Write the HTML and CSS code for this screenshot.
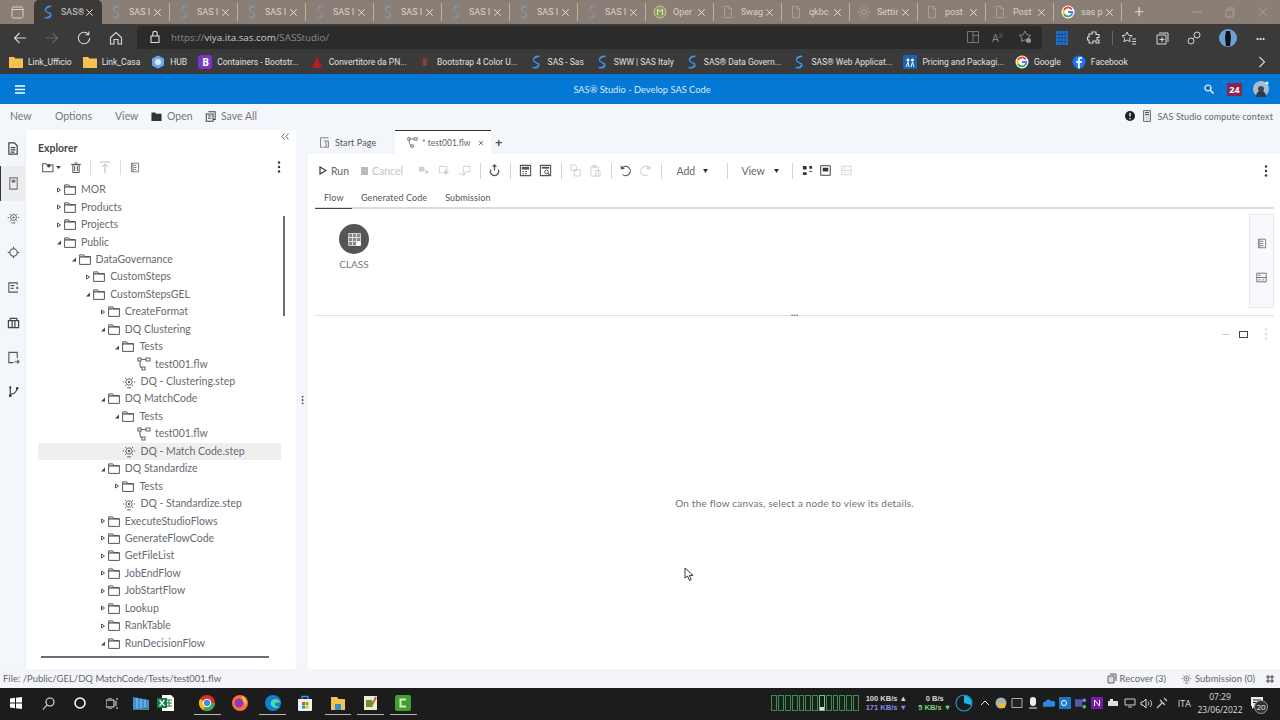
FILE: index.html
```html
<!DOCTYPE html>
<html lang="en">
<head>
<meta charset="utf-8">
<title>SAS Studio - Develop SAS Code</title>
<link rel="stylesheet" href="styles.css">
</head>
<body>
<svg class="defs" width="0" height="0" aria-hidden="true">
  <symbol id="sas" viewBox="0 0 14 16"><path d="M10.500 1.500C7 1 3.500 3 4 6c.4 2.500 6 3 6.300 5.500.2 1.700-1.500 3-3.500 3.200M3.500 14.500c3.500.5 7-1.500 6.500-4.500M4 6c.3-2 2.500-3.500 4.500-3.500" fill="none" stroke="currentColor" stroke-width="1.500" stroke-linecap="round"/></symbol>
  <symbol id="doc" viewBox="0 0 14 16"><path d="M3 1.500h5l3 3v10H3zM8 1.500v3h3" fill="none" stroke="currentColor"/></symbol>
  <symbol id="x" viewBox="0 0 10 10"><path d="M1.500 1.500l7 7m0-7l-7 7" fill="none" stroke="currentColor" stroke-width="1.100"/></symbol>
  <symbol id="folder" viewBox="0 0 12 11"><path d="M.6 2.600V.9h4.200l.8 1.700h5.800v7.800H.6z" fill="none" stroke="currentColor" stroke-width="1"/><path d="M.6 2.900h10.800" stroke="currentColor" stroke-width="1.300"/></symbol>
  <symbol id="open" viewBox="0 0 12 11"><path d="M.5 1h4l1 1.500h6v8H.5z" fill="currentColor"/></symbol>
  <symbol id="save" viewBox="0 0 12 13"><path d="M3.500 1h8v9h-2M1 3.500h8V12H1z M3 6h4M3 8.500h4" fill="none" stroke="currentColor" stroke-width="1.200"/></symbol>
  <symbol id="flow" viewBox="0 0 14 14"><path d="M1 1h3v3H1zM9 1h4v3H9zM5 10h3v3H5zM4 2.500h5M3 4v3.500c0 1.500 1 3 2 3.500" fill="none" stroke="currentColor" stroke-width="1.100"/></symbol>
  <symbol id="step" viewBox="0 0 14 14"><circle cx="7" cy="7" r="3.200" fill="none" stroke="currentColor"/><circle cx="7" cy="7" r="1.200" fill="currentColor"/><path d="M.8 7h1.400M11.800 7h1.400M3 3l1 1M11 3l-1 1M3 11l1-1M11 11l-1-1M5 12.800h4" stroke="currentColor" fill="none"/></symbol>
  <symbol id="tri-r" viewBox="0 0 6 8"><path d="M1.500 2l3 2-3 2z" fill="#fff" stroke="#555" stroke-width="1"/></symbol>
  <symbol id="tri-d" viewBox="0 0 6 8"><path d="M5 2.500v4H1z" fill="#444"/></symbol>
  <symbol id="rect-doc" viewBox="0 0 14 14"><path d="M2 1h10v12H2zM5 4h4M5 7h4M5 10h4M4 1v12" fill="none" stroke="currentColor"/></symbol>
  <symbol id="split" viewBox="0 0 14 14"><path d="M1 1.500h12v11H1zM1 7h12M3 4h3M3 10h2.500M8 10h2.500" fill="none" stroke="currentColor"/></symbol>
  <symbol id="calc" viewBox="0 0 14 14"><path d="M1.500 1.500h11v11h-11z" fill="none" stroke="currentColor" stroke-width="1.200"/><path d="M3 3h8v3H3z" fill="currentColor"/><path d="M3.500 8h2M6.500 8h2M3.500 10.500h2M6.500 10.500h2" stroke="currentColor"/></symbol>
  <symbol id="calc2" viewBox="0 0 14 14"><path d="M1.500 1.500h11v11h-11z" fill="none" stroke="currentColor" stroke-width="1.200"/><path d="M3 3h8v2H3z" fill="currentColor"/><circle cx="8" cy="8.500" r="2" fill="none" stroke="currentColor"/><path d="M9.500 10l2.500 2.500" stroke="currentColor" stroke-width="1.200"/></symbol>
  <symbol id="run-sel" viewBox="0 0 14 12"><path d="M1 2h6v5H1zM8 5l4 2.500L8 10z" fill="currentColor"/></symbol>
  <symbol id="run-fr" viewBox="0 0 14 12"><path d="M1.500 1.500h8v7h-8z" fill="none" stroke="currentColor"/><path d="M7 5l5 3-5 3z" fill="currentColor"/></symbol>
  <symbol id="run-to" viewBox="0 0 14 12"><path d="M6 1.500h7v6H6zM1 10h7M5 7.500l3 2.500-3 1.500" fill="none" stroke="currentColor"/></symbol>
  <symbol id="anchor" viewBox="0 0 14 14"><path d="M3 6a4.500 4.500 0 1 0 8 0" fill="none" stroke="currentColor" stroke-width="1.300"/><path d="M7 1v6M5 3l2-2 2 2" fill="none" stroke="currentColor" stroke-width="1.300"/></symbol>
  <symbol id="copy" viewBox="0 0 14 14"><path d="M2 1h5l1 2v4H2zM6 6h6v7H6z" fill="none" stroke="currentColor"/></symbol>
  <symbol id="paste" viewBox="0 0 14 14"><path d="M2 3h8v10H2zM4.500 1.500h3V4h-3zM7 7h5v6H7z" fill="none" stroke="currentColor"/></symbol>
  <symbol id="undo" viewBox="0 0 14 14"><path d="M3.200 4.400A5 5 0 1 1 4 11.500" fill="none" stroke="currentColor" stroke-width="1.200"/><path d="M1.500 1.500l.7 4.500 4.300-1z" fill="currentColor"/></symbol>
  <symbol id="redo" viewBox="0 0 14 14"><path d="M10.800 4.400A5 5 0 1 0 10 11.500" fill="none" stroke="currentColor" stroke-width="1.200"/><path d="M12.500 1.500l-.7 4.500-4.300-1z" fill="currentColor"/></symbol>
  <symbol id="grid4" viewBox="0 0 12 12"><path d="M1 1h4v4H1zM8 1h3v3H8zM1 8h4v3H1z" fill="currentColor"/><path d="M8 7h3" stroke="currentColor"/></symbol>
  <symbol id="box" viewBox="0 0 12 12"><path d="M.8.800h10.400v10.400H.8z" fill="none" stroke="currentColor"/><path d="M3 3h6v4H3z" fill="currentColor"/></symbol>
  <symbol id="dots" viewBox="0 0 4 12"><circle cx="2" cy="1.500" r="1.200" fill="currentColor"/><circle cx="2" cy="6" r="1.200" fill="currentColor"/><circle cx="2" cy="10.500" r="1.200" fill="currentColor"/></symbol>
</svg>

<div class="chrome-tabs">
  <div class="win-square"><svg width="13" height="13" viewBox="0 0 13 13"><path d="M1 2.500C1 1.700 1.700 1 2.500 1h8c.8 0 1.500.7 1.500 1.500v8c0 .8-.7 1.500-1.500 1.500h-8C1.700 12 1 11.300 1 10.500zM1 3.500h11" fill="none" stroke="#d8d4d0"/></svg></div>
  <div class="btab active"><svg class="fav sas-blue"><use href="#sas"/></svg><span class="btab-t">SAS®</span><svg class="btab-x"><use href="#x"/></svg></div>
  <div class="btab"><svg class="fav sas-dim"><use href="#sas"/></svg><span class="btab-t">SAS I</span><svg class="btab-x"><use href="#x"/></svg></div>
  <div class="btab"><svg class="fav sas-dim"><use href="#sas"/></svg><span class="btab-t">SAS I</span><svg class="btab-x"><use href="#x"/></svg></div>
  <div class="btab"><svg class="fav sas-dim"><use href="#sas"/></svg><span class="btab-t">SAS I</span><svg class="btab-x"><use href="#x"/></svg></div>
  <div class="btab"><svg class="fav sas-dim"><use href="#sas"/></svg><span class="btab-t">SAS I</span><svg class="btab-x"><use href="#x"/></svg></div>
  <div class="btab"><svg class="fav sas-dim"><use href="#sas"/></svg><span class="btab-t">SAS I</span><svg class="btab-x"><use href="#x"/></svg></div>
  <div class="btab"><svg class="fav sas-dim"><use href="#sas"/></svg><span class="btab-t">SAS I</span><svg class="btab-x"><use href="#x"/></svg></div>
  <div class="btab"><svg class="fav sas-dim"><use href="#sas"/></svg><span class="btab-t">SAS I</span><svg class="btab-x"><use href="#x"/></svg></div>
  <div class="btab"><svg class="fav sas-dim"><use href="#sas"/></svg><span class="btab-t">SAS I</span><svg class="btab-x"><use href="#x"/></svg></div>
  <div class="btab"><svg class="fav" viewBox="0 0 14 14"><circle cx="7" cy="7" r="6" fill="#8d9a5f" stroke="#c4cf96"/><path d="M4.500 10V4L7 7l2.500-3v6" fill="none" stroke="#dfe6b5"/></svg><span class="btab-t">Oper</span><svg class="btab-x"><use href="#x"/></svg></div>
  <div class="btab"><svg class="fav doc-dim"><use href="#doc"/></svg><span class="btab-t">Swag</span><svg class="btab-x"><use href="#x"/></svg></div>
  <div class="btab"><svg class="fav doc-dim"><use href="#doc"/></svg><span class="btab-t">qkbc</span><svg class="btab-x"><use href="#x"/></svg></div>
  <div class="btab"><svg class="fav doc-dim" viewBox="0 0 14 14"><circle cx="7" cy="7" r="2.500" fill="none" stroke="currentColor"/><path d="M7 1v2M7 11v2M1 7h2M11 7h2M2.800 2.800l1.400 1.400M9.800 9.800l1.400 1.400M2.800 11.200l1.400-1.400M9.800 4.200l1.400-1.400" stroke="currentColor"/></svg><span class="btab-t">Settir</span><svg class="btab-x"><use href="#x"/></svg></div>
  <div class="btab"><svg class="fav doc-dim"><use href="#doc"/></svg><span class="btab-t">post</span><svg class="btab-x"><use href="#x"/></svg></div>
  <div class="btab"><svg class="fav doc-dim"><use href="#doc"/></svg><span class="btab-t">Post</span><svg class="btab-x"><use href="#x"/></svg></div>
  <div class="btab"><svg class="fav" viewBox="0 0 14 14"><circle cx="7" cy="7" r="6.500" fill="#fff"/><path d="M10.800 4.500A4.500 4.500 0 0 0 3 5" fill="none" stroke="#ea4335" stroke-width="1.800"/><path d="M3 5a4.500 4.500 0 0 0 0 4" fill="none" stroke="#fbbc05" stroke-width="1.800"/><path d="M3 9a4.500 4.500 0 0 0 7.500.8" fill="none" stroke="#34a853" stroke-width="1.800"/><path d="M7 7h4.300a4.500 4.500 0 0 1-1 3" fill="none" stroke="#4285f4" stroke-width="1.800"/></svg><span class="btab-t">sas p</span><svg class="btab-x"><use href="#x"/></svg></div>
  <div class="btab-new">+</div>
  <div class="win-ctrls">
    <svg width="12" height="12" viewBox="0 0 12 12"><path d="M1 6h10" stroke="#a89d94"/></svg>
    <svg width="12" height="12" viewBox="0 0 12 12"><path d="M2 4h7v7H2zM4 4V2h6v6H9" fill="none" stroke="#a89d94"/></svg>
    <svg width="12" height="12" viewBox="0 0 12 12"><path d="M1.500 1.500l9 9m0-9l-9 9" stroke="#a89d94"/></svg>
  </div>
</div>

<div class="chrome-addr">
  <div class="nav-ic"><svg width="16" height="16" viewBox="0 0 16 16"><path d="M14 8H2.500M7.500 3l-5 5 5 5" fill="none" stroke="#d8d8d8" stroke-width="1.100"/></svg></div>
  <div class="nav-ic"><svg width="16" height="16" viewBox="0 0 16 16"><path d="M2 8h11.500M8.500 3l5 5-5 5" fill="none" stroke="#666" stroke-width="1.100"/></svg></div>
  <div class="nav-ic"><svg width="16" height="16" viewBox="0 0 16 16"><path d="M12.500 4.500A5.700 5.700 0 1 0 13.700 8M12.800 1.500v3.300H9.500" fill="none" stroke="#d8d8d8" stroke-width="1.100"/></svg></div>
  <div class="nav-ic"><svg width="16" height="16" viewBox="0 0 16 16"><path d="M2.500 7.500L8 2.500l5.500 5V14H10V9.500H6V14H2.500z" fill="none" stroke="#d8d8d8" stroke-width="1.100"/></svg></div>
  <div class="omnibox">
    <svg width="12" height="14" viewBox="0 0 12 14"><path d="M2 6h8v6.500H2zM3.800 6V3.500a2.200 2.200 0 0 1 4.400 0V6" fill="none" stroke="#e2e2e2" stroke-width="1.100"/></svg>
    <span class="url"><span class="url-dim">https://</span><span class="url-b">viya.ita.sas.com</span><span class="url-dim">/SASStudio/</span></span>
    <div class="omni-end">
      <svg width="14" height="14" viewBox="0 0 14 14"><path d="M1.500 1.500h11v11h-11zM7 1.500v11M7 5.500h5.500" fill="none" stroke="#777"/></svg>
      <span class="read-a">A<sup>))</sup></span>
      <svg width="14" height="14" viewBox="0 0 14 14"><path d="M7 1l1.800 3.700 4 .6-2.900 2.800.7 4L7 9.700 3.400 11.600l.7-4L1.200 5.300l4-.6z" fill="none" stroke="#888"/><circle cx="10.500" cy="10.500" r="2.500" fill="#999"/></svg>
    </div>
  </div>
  <div class="bar-ext">
    <svg class="ext-1" width="12" height="14" viewBox="0 0 12 14"><path d="M0 0h12v14H0z" fill="#2473d4"/><path d="M0 3.500h12M0 7h12M0 10.500h12M3 0v14M6 0v14M9 0v14" stroke="#15437a" stroke-width=".7"/></svg>
    <svg class="ext-2" width="16" height="16" viewBox="0 0 16 16"><path d="M6 2h4v2.500h3v3h-2v2.500h2v3H10v-2H7v2H3v-3H1.500v-3H3v-3h3z" fill="none" stroke="#d8d8d8" stroke-width="1.100"/></svg>
    <i class="ext-sep"></i>
    <svg class="ext-3" width="16" height="16" viewBox="0 0 16 16"><path d="M6 2l1.500 3.200 3.500.5-2.500 2.500.6 3.500L6 10 3 11.700l.6-3.500L1 5.700l3.500-.5zM11 9h4M11 11.500h4M11 14h4" fill="none" stroke="#d8d8d8"/></svg>
    <svg class="ext-4" width="16" height="16" viewBox="0 0 16 16"><path d="M3 5h9v9H3zM5 3h9v9M8 7v5M5.500 9.500h5" fill="none" stroke="#d8d8d8"/></svg>
    <svg class="ext-5" width="16" height="16" viewBox="0 0 16 16"><circle cx="5" cy="11" r="3" fill="none" stroke="#d8d8d8"/><circle cx="11" cy="5" r="3" fill="none" stroke="#d8d8d8"/><path d="M8 7.500L7 9" stroke="#d8d8d8"/></svg>
    <svg class="ext-6" width="18" height="18" viewBox="0 0 18 18"><circle cx="9" cy="9" r="9" fill="#6f9fd8"/><path d="M7 2h4l1 6-1 9H7L6 8z" fill="#111"/></svg>
    <span class="ext-7">···</span>
  </div>
</div>

<div class="chrome-bookmarks">
  <div class="bm"><svg class="bm-i" viewBox="0 0 14 12"><path d="M0 1h5l1.500 1.500H14V12H0z" fill="#f2c34e"/></svg><span>Link_Ufficio</span></div>
  <div class="bm"><svg class="bm-i" viewBox="0 0 14 12"><path d="M0 1h5l1.500 1.500H14V12H0z" fill="#f2c34e"/></svg><span>Link_Casa</span></div>
  <div class="bm"><svg class="bm-i" viewBox="0 0 14 14"><path d="M7 .5l6 3v7l-6 3-6-3v-7z" fill="#6aa8e8"/><circle cx="7" cy="7" r="3" fill="#d9ecff"/></svg><span>HUB</span></div>
  <div class="bm"><svg class="bm-i" viewBox="0 0 14 14"><rect width="14" height="14" rx="3" fill="#7a34c8"/></svg><b class="bm-b">B</b><span>Containers - Bootstr...</span></div>
  <div class="bm"><svg class="bm-i" viewBox="0 0 14 14"><path d="M7 1l5 12H2z" fill="#b3201c"/></svg><span>Convertitore da PN...</span></div>
  <div class="bm"><svg class="bm-i" viewBox="0 0 14 14"><path d="M3 2h8v10H3z" fill="#443a3a"/><path d="M6 3v8M8 4v6" stroke="#c44"/></svg><span>Bootstrap 4 Color U...</span></div>
  <div class="bm"><svg class="bm-i sas-blue"><use href="#sas"/></svg><span>SAS - Sas</span></div>
  <div class="bm"><svg class="bm-i sas-blue"><use href="#sas"/></svg><span>SWW | SAS Italy</span></div>
  <div class="bm"><svg class="bm-i sas-blue"><use href="#sas"/></svg><span>SAS® Data Govern...</span></div>
  <div class="bm"><svg class="bm-i sas-blue"><use href="#sas"/></svg><span>SAS® Web Applicat...</span></div>
  <div class="bm"><svg class="bm-i" viewBox="0 0 14 14"><rect width="14" height="14" fill="#1d62b5"/><circle cx="5" cy="5" r="1.500" fill="#fff"/><circle cx="9.500" cy="5" r="1.500" fill="#fff"/><path d="M3 12l2-5 1 5M8 12l1.500-5 1.500 5" stroke="#fff" fill="none"/></svg><span>Pricing and Packagi...</span></div>
  <div class="bm"><svg class="bm-i" viewBox="0 0 14 14"><circle cx="7" cy="7" r="6.500" fill="#fff"/><path d="M10.800 4.500A4.500 4.500 0 0 0 3 5" fill="none" stroke="#ea4335" stroke-width="1.800"/><path d="M3 5a4.500 4.500 0 0 0 0 4" fill="none" stroke="#fbbc05" stroke-width="1.800"/><path d="M3 9a4.500 4.500 0 0 0 7.500.8" fill="none" stroke="#34a853" stroke-width="1.800"/><path d="M7 7h4.300a4.500 4.500 0 0 1-1 3" fill="none" stroke="#4285f4" stroke-width="1.800"/></svg><span>Google</span></div>
  <div class="bm"><svg class="bm-i" viewBox="0 0 14 14"><circle cx="7" cy="7" r="6.500" fill="#1877f2"/><path d="M7.800 13.500V8h1.700l.3-2H7.800V4.800c0-.6.3-1 1-1h1.100V2.200C9 2 7.200 1.800 6.400 3c-.5.600-.5 1.300-.5 3H4.300v2h1.600v5.500z" fill="#fff"/></svg><span>Facebook</span></div>
  <svg class="bm-more" width="8" height="12" viewBox="0 0 8 12"><path d="M1.500 1l5 5-5 5" fill="none" stroke="#d8d8d8" stroke-width="1.100"/></svg>
</div>

<header class="app-header">
  <svg class="app-burger" width="10" height="9" viewBox="0 0 10 9"><path d="M0 1h10M0 4.500h10M0 8h10" stroke="#fff" stroke-width="1.500"/></svg>
  <div class="app-title">SAS® Studio - Develop SAS Code</div>
  <div class="app-right">
    <svg width="10" height="10" viewBox="0 0 10 10"><circle cx="4" cy="4" r="3" fill="none" stroke="#fff" stroke-width="1.200"/><path d="M6.300 6.300L9.500 9.500" stroke="#fff" stroke-width="1.300"/></svg>
    <span class="badge24">24</span>
    <svg width="16" height="16" viewBox="0 0 16 16"><circle cx="8" cy="8" r="8" fill="#a9bdd0"/><circle cx="8" cy="8" r="3" fill="#3c4a55"/><path d="M3 16c0-5 3-6 5-6s5 1 5 6z" fill="#2f3a44"/><circle cx="14" cy="2" r="1.500" fill="#dff"/></svg>
  </div>
</header>

<nav class="app-menu">
  <span class="m-new">New</span>
  <span class="m-opt">Options</span>
  <span class="m-view">View</span>
  <span class="m-open"><svg class="m-i"><use href="#open"/></svg>Open</span>
  <span class="m-save"><svg class="m-i"><use href="#save"/></svg>Save All</span>
  <div class="m-right">
    <svg width="10" height="10" viewBox="0 0 10 10"><circle cx="5" cy="5" r="5" fill="#222"/><path d="M5 2v3.500M5 7v1.200" stroke="#fff" stroke-width="1.400"/></svg>
    <svg class="m-srv" width="8" height="12" viewBox="0 0 8 12"><path d="M.5.500h7v11h-7z" fill="#ddd" stroke="#777"/><path d="M2 2.500h4M2 4.500h4" stroke="#555"/></svg>
    <span>SAS Studio compute context</span>
  </div>
</nav>

<div class="workspace">
  <aside class="rail">
    <div class="rail-i"><svg viewBox="0 0 14 14"><path d="M2 1h6l3 3v9H2zM4 6h5M4 8.500h5M4 11h4" fill="none" stroke="#444" stroke-width="1.300"/></svg></div>
    <div class="rail-i on"><svg viewBox="0 0 14 14"><path d="M3 1h8v12H3z" fill="none" stroke="#777" stroke-width="1.200"/><path d="M5 3h4v3H5z" fill="#777"/></svg></div>
    <div class="rail-i"><svg><use href="#step"/></svg></div>
    <div class="rail-i"><svg viewBox="0 0 14 14"><circle cx="7" cy="7" r="4" fill="none" stroke="#555" stroke-width="1.200"/><path d="M7 .8v2.200M7 11v2.200M.8 7H3M11 7h2.200" stroke="#555" stroke-width="1.200"/></svg></div>
    <div class="rail-i"><svg viewBox="0 0 14 14"><path d="M11 4V2H2v10h9v-1M4 5h4M4 8h3" fill="none" stroke="#555" stroke-width="1.200"/><path d="M11 6v3M9.500 7.500h3" stroke="#555"/></svg></div>
    <div class="rail-i"><svg viewBox="0 0 14 14"><path d="M1.500 5h11v7.500h-11zM3.500 5V2.500h7V5M5.500 5v7.500M8.500 5v7.500" fill="none" stroke="#444" stroke-width="1.300"/></svg></div>
    <div class="rail-i"><svg viewBox="0 0 14 14"><path d="M7 12.500H2v-11h9v6" fill="none" stroke="#555" stroke-width="1.200"/><path d="M8 11.500h5M11 9.500l2 2-2 2" fill="none" stroke="#555" stroke-width="1.100"/></svg></div>
    <div class="rail-i"><svg viewBox="0 0 14 14"><circle cx="3.500" cy="11.500" r="1.500" fill="#333"/><circle cx="3.500" cy="2.500" r="1.200" fill="#333"/><circle cx="11" cy="3.500" r="1.300" fill="#333"/><path d="M3.500 3v7M3.500 10c4 0 6.500-2.500 7.500-6" fill="none" stroke="#333" stroke-width="1.200"/></svg></div>
  </aside>

  <section class="explorer">
    <div class="ex-head"><h2>Explorer</h2><svg width="8" height="7" viewBox="0 0 8 7"><path d="M3.500.5L.8 3.500l2.700 3M7.500.5L4.800 3.500l2.700 3" fill="none" stroke="#666"/></svg></div>
    <div class="ex-tools">
      <svg class="t-new" width="12" height="11" viewBox="0 0 14 12"><path d="M.8 3V1.500h4l1 1.500h7v8H.8z" fill="none" stroke="#555" stroke-width="1.200"/><circle cx="8" cy="4" r="2" fill="#444"/></svg>
      <svg class="t-car" width="5" height="3" viewBox="0 0 5 3"><path d="M0 0h5L2.500 3z" fill="#444"/></svg>
      <svg class="t-del" width="10" height="11" viewBox="0 0 11 12"><path d="M2 3h7v8.500H2zM0 2.500h11M4 1h3M4 4.500v5.500M7 4.500v5.500" fill="none" stroke="#555" stroke-width="1.100"/></svg>
      <i class="t-sep"></i>
      <svg class="t-up" width="10" height="12" viewBox="0 0 10 12"><path d="M0 1h10M5 12V3M2 6l3-3 3 3" fill="none" stroke="#bbb"/></svg>
      <i class="t-sep"></i>
      <svg class="t-prop" width="10" height="11"><use href="#rect-doc"/></svg>
      <svg class="t-dots" width="4" height="12"><use href="#dots"/></svg>
    </div>
    <ul class="tree">
      <li class="row l0"><svg class="arr"><use href="#tri-r"/></svg><svg class="fld"><use href="#folder"/></svg>MOR</li>
      <li class="row l0"><svg class="arr"><use href="#tri-r"/></svg><svg class="fld"><use href="#folder"/></svg>Products</li>
      <li class="row l0"><svg class="arr"><use href="#tri-r"/></svg><svg class="fld"><use href="#folder"/></svg>Projects</li>
      <li class="row l0"><svg class="arr"><use href="#tri-d"/></svg><svg class="fld"><use href="#folder"/></svg>Public</li>
      <li class="row l1"><svg class="arr"><use href="#tri-d"/></svg><svg class="fld"><use href="#folder"/></svg>DataGovernance</li>
      <li class="row l2"><svg class="arr"><use href="#tri-r"/></svg><svg class="fld"><use href="#folder"/></svg>CustomSteps</li>
      <li class="row l2"><svg class="arr"><use href="#tri-d"/></svg><svg class="fld"><use href="#folder"/></svg>CustomStepsGEL</li>
      <li class="row l3"><svg class="arr"><use href="#tri-r"/></svg><svg class="fld"><use href="#folder"/></svg>CreateFormat</li>
      <li class="row l3"><svg class="arr"><use href="#tri-d"/></svg><svg class="fld"><use href="#folder"/></svg>DQ Clustering</li>
      <li class="row l4"><svg class="arr"><use href="#tri-d"/></svg><svg class="fld"><use href="#folder"/></svg>Tests</li>
      <li class="row l5 leaf"><svg class="fil"><use href="#flow"/></svg>test001.flw</li>
      <li class="row l4 leaf"><svg class="fil"><use href="#step"/></svg>DQ - Clustering.step</li>
      <li class="row l3"><svg class="arr"><use href="#tri-d"/></svg><svg class="fld"><use href="#folder"/></svg>DQ MatchCode</li>
      <li class="row l4"><svg class="arr"><use href="#tri-d"/></svg><svg class="fld"><use href="#folder"/></svg>Tests</li>
      <li class="row l5 leaf"><svg class="fil"><use href="#flow"/></svg>test001.flw</li>
      <li class="row l4 leaf sel"><svg class="fil"><use href="#step"/></svg>DQ - Match Code.step</li>
      <li class="row l3"><svg class="arr"><use href="#tri-d"/></svg><svg class="fld"><use href="#folder"/></svg>DQ Standardize</li>
      <li class="row l4"><svg class="arr"><use href="#tri-r"/></svg><svg class="fld"><use href="#folder"/></svg>Tests</li>
      <li class="row l4 leaf"><svg class="fil"><use href="#step"/></svg>DQ - Standardize.step</li>
      <li class="row l3"><svg class="arr"><use href="#tri-r"/></svg><svg class="fld"><use href="#folder"/></svg>ExecuteStudioFlows</li>
      <li class="row l3"><svg class="arr"><use href="#tri-r"/></svg><svg class="fld"><use href="#folder"/></svg>GenerateFlowCode</li>
      <li class="row l3"><svg class="arr"><use href="#tri-r"/></svg><svg class="fld"><use href="#folder"/></svg>GetFileList</li>
      <li class="row l3"><svg class="arr"><use href="#tri-r"/></svg><svg class="fld"><use href="#folder"/></svg>JobEndFlow</li>
      <li class="row l3"><svg class="arr"><use href="#tri-r"/></svg><svg class="fld"><use href="#folder"/></svg>JobStartFlow</li>
      <li class="row l3"><svg class="arr"><use href="#tri-r"/></svg><svg class="fld"><use href="#folder"/></svg>Lookup</li>
      <li class="row l3"><svg class="arr"><use href="#tri-r"/></svg><svg class="fld"><use href="#folder"/></svg>RankTable</li>
      <li class="row l3"><svg class="arr"><use href="#tri-d"/></svg><svg class="fld"><use href="#folder"/></svg>RunDecisionFlow</li>
    </ul>
    <div class="sb-v"></div>
    <div class="sb-h"></div>
  </section>

  <div class="gutter"><svg width="3" height="12" viewBox="0 0 4 12"><use href="#dots"/></svg></div>

  <main class="main">
    <div class="doc-tabs">
      <div class="dt dt-start"><svg class="dt-i" viewBox="0 0 12 14"><path d="M11 1H1v12h3M5 5h6v8H5" fill="none" stroke="#666"/><path d="M9.500 6.500c-2-.5-3 1-1.500 2.500s.5 3-1.500 2.500" fill="none" stroke="#666"/></svg>Start Page</div>
      <div class="dt dt-active"><svg class="dt-i"><use href="#flow"/></svg>* test001.flw<svg class="dt-x"><use href="#x"/></svg></div>
      <div class="dt-add">+</div>
    </div>
    <div class="toolbar">
      <span class="tb-run"><svg width="8" height="9" viewBox="0 0 8 9"><path d="M1 1l6 3.500L1 8z" fill="#fff" stroke="#333" stroke-width="1.200"/></svg>Run</span>
      <span class="tb-cancel"><svg width="7" height="8" viewBox="0 0 7 8"><path d="M0 0h7v8H0z" fill="#bbb"/></svg>Cancel</span>
      <svg class="ti off first"><use href="#run-sel"/></svg>
      <svg class="ti off"><use href="#run-fr"/></svg>
      <svg class="ti off"><use href="#run-to"/></svg>
      <i class="sep"></i>
      <svg class="ti"><use href="#anchor"/></svg>
      <i class="sep"></i>
      <svg class="ti"><use href="#calc"/></svg>
      <svg class="ti"><use href="#calc2"/></svg>
      <i class="sep"></i>
      <svg class="ti off"><use href="#copy"/></svg>
      <svg class="ti off"><use href="#paste"/></svg>
      <i class="sep"></i>
      <svg class="ti"><use href="#undo"/></svg>
      <svg class="ti off"><use href="#redo"/></svg>
      <i class="sep"></i>
      <span class="tb-dd tb-add">Add<svg width="5" height="4" viewBox="0 0 5 4"><path d="M0 0h5L2.500 4z" fill="#333"/></svg></span>
      <i class="sep sep-dd"></i>
      <span class="tb-dd tb-view">View<svg width="5" height="4" viewBox="0 0 5 4"><path d="M0 0h5L2.500 4z" fill="#333"/></svg></span>
      <i class="sep sep-dd2"></i>
      <svg class="ts"><use href="#grid4"/></svg>
      <svg class="ts ts-mid"><use href="#box"/></svg>
      <svg class="ts off"><use href="#split"/></svg>
      <svg class="tb-dots" width="4" height="12"><use href="#dots"/></svg>
    </div>
    <div class="subtabs">
      <span class="st st-on">Flow</span>
      <span class="st">Generated Code</span>
      <span class="st">Submission</span>
    </div>
    <div class="canvas">
      <div class="node">
        <div class="node-c"><svg width="13" height="13" viewBox="0 0 13 13"><path d="M.5.500h12v12H.500z" fill="#8a8a8a" stroke="#ccc"/><path d="M.5 4.500h12M.5 8.500h12M4.500.5v12M8.500.5v12" stroke="#ddd"/><circle cx="10.500" cy="10.500" r="2.500" fill="#fff"/></svg></div>
        <span>CLASS</span>
      </div>
      <div class="side-tabs">
        <svg width="10" height="11"><use href="#rect-doc"/></svg>
        <svg width="11" height="11"><use href="#split"/></svg>
      </div>
    </div>
    <div class="split-bar"><span>···</span></div>
    <div class="details">
      <div class="details-ctl">
        <i class="c-min"></i>
        <i class="c-max"></i>
        <svg class="c-dots" width="4" height="12"><use href="#dots"/></svg>
      </div>
      <div class="details-msg">On the flow canvas, select a node to view its details.</div>
    </div>
  </main>
</div>

<footer class="statusbar">
  <span class="sb-file">File: /Public/GEL/DQ MatchCode/Tests/test001.flw</span>
  <span class="sb-item sb-rec"><svg width="10" height="11" viewBox="0 0 10 11"><path d="M3 1h6v7M1 3h6v7H1z" fill="#ddd" stroke="#666"/></svg>Recover (3)</span>
  <span class="sb-item sb-sub"><svg width="11" height="11" viewBox="0 0 14 14"><use href="#step"/></svg>Submission (0)</span>
  <svg class="sb-exp" width="10" height="10" viewBox="0 0 10 10"><path d="M3 1v2H1M7 1v2h2M3 9V7H1M7 9V7h2M3 3h4v4H3z" fill="none" stroke="#444"/></svg>
</footer>

<div class="taskbar">
  <svg class="tk" width="12" height="12" viewBox="0 0 12 12"><path d="M0 1.500L5 .8v4.700H0zM6 .7L12 0v5.500H6zM0 6.500h5v4.700l-5-.7zM6 6.500h6V12l-6-.8z" fill="#fff"/></svg>
  <svg class="tk" width="13" height="13" viewBox="0 0 13 13"><circle cx="8" cy="5" r="4" fill="none" stroke="#eee" stroke-width="1.100"/><path d="M5 8l-4 4.500" stroke="#eee" stroke-width="1.100"/></svg>
  <svg class="tk" width="12" height="12" viewBox="0 0 12 12"><circle cx="6" cy="6" r="5" fill="none" stroke="#fff" stroke-width="1.500"/></svg>
  <svg class="tk tk-view" width="12" height="11" viewBox="0 0 12 11"><path d="M0 2h8v7H0zM10 1h2M10 10h2M10 3v5M2 0h4M2 11h4" fill="none" stroke="#eee"/></svg>
  <svg class="tk ap" width="18" height="18" viewBox="0 0 18 18"><path d="M1 3l16 3v8L1 16z" fill="#3f8fd6"/><path d="M1 16l16-2v2H1z" fill="#4a9a4a"/><path d="M5 4v11M9 5v9M13 5.500v8" stroke="#8ec6f0"/></svg>
  <svg class="tk ap" width="18" height="18" viewBox="0 0 18 18"><path d="M5 1h9l3 3v13H5z" fill="#fff"/><path d="M10 6h5M10 9h5M10 12h5M12 6v6" stroke="#217346"/><rect y="4" width="10" height="10" fill="#107c41"/><path d="M2.500 6l5 6M7.500 6l-5 6" stroke="#fff" stroke-width="1.300"/></svg>
  <div class="tk-app run"><svg width="16" height="16" viewBox="0 0 16 16"><circle cx="8" cy="8" r="8" fill="#d93025"/><path d="M8 8L1.100 4a8 8 0 0 0 3.500 11.300z" fill="#fbbc05"/><path d="M8 8l-3.400 7.300A8 8 0 0 0 16 8z" fill="#34a853"/><circle cx="8" cy="8" r="3.800" fill="#4285f4" stroke="#fff"/></svg></div>
  <div class="tk-app"><svg width="16" height="16" viewBox="0 0 16 16"><circle cx="8" cy="8" r="8" fill="#ff7139"/><circle cx="7" cy="8" r="4.500" fill="#8a3bbd"/><path d="M10 1c4 2 5 6 4 9l-3-4z" fill="#ffbd4f"/></svg></div>
  <div class="tk-app run"><svg width="16" height="16" viewBox="0 0 16 16"><circle cx="8" cy="8" r="8" fill="#0f7fd4"/><path d="M16 9c0-3-3-5-6-5S5 7 6 10s6 4 9 2c-3 0-5-1-5-3s6-2 6 0z" fill="#4fd69c"/></svg></div>
  <div class="tk-app"><svg width="16" height="16" viewBox="0 0 16 16"><path d="M1 4h14v11a1 1 0 0 1-1 1H2a1 1 0 0 1-1-1z" fill="#eef2f5"/><path d="M5 4V1.500h6V4" fill="none" stroke="#3a96dd" stroke-width="1.300"/><path d="M5 7h3v3H5z" fill="#f25022"/><path d="M8.500 7h3v3h-3z" fill="#7fba00"/><path d="M5 10.500h3v3H5z" fill="#00a4ef"/><path d="M8.500 10.500h3v3h-3z" fill="#ffb900"/></svg></div>
  <div class="tk-app run"><svg width="16" height="15" viewBox="0 0 16 15"><path d="M1 1h6l1.500 2H15v11H1z" fill="#f2c34e"/><path d="M5 8h6v6H5z" fill="#2f8fd6"/></svg></div>
  <div class="tk-app run"><svg width="15" height="16" viewBox="0 0 15 16"><path d="M1 1h13v14H1z" fill="#e7efd8"/><path d="M3 5h6v7H3z" fill="#6c8f3a"/><path d="M8 12l5-10" stroke="#c46b2b" stroke-width="2"/></svg></div>
  <div class="tk-app run"><svg width="16" height="16" viewBox="0 0 16 16"><rect width="16" height="16" rx="2" fill="#44a02e"/><path d="M11 4.500H5.500v7H11" fill="none" stroke="#cfeec3" stroke-width="2"/></svg></div>

  <div class="tray">
    <div class="meter"><i></i><i></i><i></i><i></i><i></i><i></i><i></i><i class="hi"></i><i></i><i></i><i></i><i></i><i></i></div>
    <div class="net"><span class="n-w">100 KB/s ▲</span><span class="n-b">171 KB/s ▼</span></div>
    <div class="net2"><span class="n-w">0 B/s</span><span class="n-g">5 KB/s ▼</span></div>
    <svg class="pie" width="18" height="18" viewBox="0 0 18 18"><circle cx="9" cy="9" r="8" fill="none" stroke="#18a8d8" stroke-width="1.100"/><path d="M9 9V1.500A7.500 7.500 0 0 1 16 11z" fill="#18b8e8"/></svg>
    <svg class="ty" width="10" height="6" viewBox="0 0 10 6"><path d="M1 5l4-4 4 4" fill="none" stroke="#eee"/></svg>
    <svg class="ty" width="12" height="12" viewBox="0 0 12 12"><circle cx="6" cy="6" r="5.500" fill="#9fb4b4"/><path d="M4 6h6v5H4z" fill="#f3b82d"/></svg>
    <svg class="ty" width="11" height="10" viewBox="0 0 11 10"><path d="M.5.500h10v9H.500z" fill="#222" stroke="#aaa"/></svg>
    <svg class="ty" width="8" height="13" viewBox="0 0 8 13"><rect x="1" width="6" height="9" rx="3" fill="#eee"/><path d="M0 11h8" stroke="#eee"/></svg>
    <svg class="ty" width="13" height="8" viewBox="0 0 13 8"><path d="M1 8a2.500 2.500 0 0 1 1-5 4 4 0 0 1 7-1 3 3 0 0 1 3 6z" fill="#2b88e0"/></svg>
    <svg class="ty" width="12" height="12" viewBox="0 0 12 12"><rect width="12" height="12" fill="#1a78c8"/><circle cx="5" cy="6" r="2.500" fill="none" stroke="#fff"/></svg>
    <svg class="ty" width="13" height="12" viewBox="0 0 13 12"><rect x="0" y="2" width="8" height="8" fill="#5558af"/><circle cx="10" cy="3" r="2" fill="#7b83eb"/><circle cx="10" cy="10" r="2" fill="#5bb55b"/></svg>
    <svg class="ty" width="12" height="12" viewBox="0 0 12 12"><rect width="12" height="12" fill="#7719aa"/><path d="M3.500 9V3l5 6V3" fill="none" stroke="#fff"/></svg>
    <svg class="ty" width="12" height="9" viewBox="0 0 12 9"><path d="M1 2h10v5H1z" fill="#ddd"/><path d="M3 0h3v2H3z" fill="#eee"/></svg>
    <svg class="ty" width="12" height="11" viewBox="0 0 12 11"><path d="M1 1h10v6H1zM4 9h4" fill="none" stroke="#ccc"/></svg>
    <svg class="ty" width="12" height="11" viewBox="0 0 12 11"><path d="M1 4h2l3-3v9L3 7H1z" fill="none" stroke="#ddd"/><path d="M8 3.500c1 1 1 3 0 4M10 2c2 2 2 5 0 7" fill="none" stroke="#ddd"/></svg>
    <svg class="ty" width="12" height="12" viewBox="0 0 12 12"><path d="M1 11l5-5M4 3l5 5M8 1l3 3" fill="none" stroke="#ccc" stroke-width="1.200"/></svg>
    <span class="lang">ITA</span>
    <div class="clock"><span>07:29</span><span>23/06/2022</span></div>
    <div class="notif"><svg width="12" height="12" viewBox="0 0 12 12"><path d="M0 0h12v9H4l-3 3V9H0z" fill="#eee"/><path d="M2 3h8M2 5.500h8" stroke="#222"/></svg><b>20</b></div>
  </div>
</div>

<svg class="cursor" width="10" height="15" viewBox="0 0 10 15"><path d="M1 1v10l2.500-2 2 4.500 1.800-.8-2-4.300H9z" fill="#fff" stroke="#222" stroke-width=".9"/></svg>
</body>
</html>
```

FILE: styles.css
```css
* { box-sizing: border-box; }
html, body { margin: 0; padding: 0; }
body {
  width: 1280px; height: 720px; overflow: hidden; position: relative;
  display: flex; flex-direction: column;
  font-family: Lato, "Open Sans", sans-serif; color: #555; background: #fff;
}
.defs { position: absolute; }
svg { display: block; flex: none; }
i { display: block; font-style: normal; }

/* browser tabs */
.chrome-tabs { height: 24px; flex: none; display: flex; align-items: stretch; background: #8a7e75; font: 9px Roboto, sans-serif; color: #d8d2cc; }
.win-square { width: 34px; display: flex; align-items: center; justify-content: center; }
.btab { width: 68px; display: flex; align-items: center; padding-left: 7px; border-right: 1px solid #b9b0a8; margin: 3px 0; }
.btab.active { background: #3b3a39; border: none; margin: 0; border-radius: 5px 5px 0 0; color: #cfcfcf; }
.fav { width: 14px; height: 14px; }
.sas-blue { color: #3d93e8; }
.sas-dim { color: #7e95a8; }
.doc-dim { color: #aea59d; }
.btab-t { margin-left: 6px; width: 23px; overflow: hidden; white-space: nowrap; }
.btab-x { width: 9px; height: 9px; margin-left: 1px; color: #e6e1dc; }
.btab-new { width: 28px; color: #cfc8c1; font-size: 17px; line-height: 22px; text-align: center; margin-left: 3px; }
.win-ctrls { margin-left: auto; display: flex; align-items: center; gap: 21px; padding-right: 11px; }

/* address row */
.chrome-addr { height: 25px; flex: none; display: flex; align-items: flex-end; background: #3a3a3a; padding-left: 4px; }
.nav-ic { width: 32px; height: 23px; display: flex; justify-content: center; align-items: center; }
.omnibox { margin-left: 5px; width: 905px; height: 23px; background: #2b2b2b; border-radius: 3px 0 0 0; display: flex; align-items: center; padding: 0 0 1px 12px; }
.url { margin-left: 10px; font: 9.800px "Open Sans", sans-serif; }
.url-dim { color: #8c8c8c; }
.url-b { color: #c9c9c9; }
.omni-end { margin-left: auto; padding-right: 10px; display: flex; align-items: center; gap: 12px; }
.read-a { color: #888; font: 11px "Open Sans", sans-serif; width: 14px; }
.read-a sup { font-size: 5px; }
.bar-ext { flex: 1; height: 23px; display: flex; align-items: center; color: #ddd; }
.ext-1 { margin-left: 14px; }
.ext-2 { margin-left: 18px; }
.ext-sep { width: 1px; height: 14px; background: #666; margin-left: 10px; }
.ext-3 { margin-left: 8px; }
.ext-4 { margin-left: 17px; }
.ext-5 { margin-left: 16px; }
.ext-6 { margin-left: 17px; }
.ext-7 { margin-left: 19px; font-size: 11px; font-weight: 700; }

/* bookmarks */
.chrome-bookmarks { height: 25px; flex: none; display: flex; align-items: center; gap: 11px; background: #3a3a3a; padding-left: 9px; font: 8.500px Roboto, sans-serif; color: #e2e2e2; white-space: nowrap; }
.bm { display: flex; align-items: center; gap: 5px; position: relative; }
.bm-i { width: 14px; height: 14px; }
.bm-b { position: absolute; left: 4px; top: 0; font: 700 10px/14px "Open Sans", sans-serif; color: #fff; }
.bm-more { margin-left: auto; margin-right: 14px; }

/* app header */
.app-header { height: 30px; flex: none; background: #0378d5; display: grid; grid-template-columns: 1fr auto 1fr; align-items: center; padding: 0 11px 0 15px; color: #e8f2fb; }
.app-title { font-size: 9.300px; color: #dcebf8; }
.app-right { justify-self: end; display: flex; align-items: center; gap: 13px; }
.app-right svg:last-child { margin-left: -2px; }
.badge24 { background: #8b2252; color: #fff; font: 700 9px/13px "Open Sans", sans-serif; width: 15px; text-align: center; }

/* menu */
.app-menu { height: 26px; flex: none; display: flex; align-items: center; background: #f3f6fb; font-size: 10.500px; color: #777; padding-bottom: 2px; }
.m-new { margin-left: 10px; width: 45px; }
.m-opt { width: 60px; }
.m-view { width: 36px; }
.m-open { display: flex; align-items: center; gap: 5px; width: 54px; }
.m-save { display: flex; align-items: center; gap: 5px; color: #777; }
.m-i { width: 11px; height: 11px; color: #333; }
.m-save .m-i { color: #444; }
.m-right { margin-left: auto; padding-right: 7px; display: flex; align-items: center; font-size: 9px; color: #666; letter-spacing: .12px; }
.m-srv { margin: 0 6px 0 8px; }

/* workspace */
.workspace { flex: 1; min-height: 0; display: flex; background: #f3f6fb; }
.rail { width: 26px; flex: none; display: flex; flex-direction: column; padding-top: 1px; border-right: 1px solid #eceff3; }
.rail-i { height: 34.800px; display: flex; align-items: center; justify-content: center; color: #555; border-left: 1px solid transparent; }
.rail-i svg { width: 13px; height: 13px; }
.rail-i.on { background: #ebedf0; border-left-color: #333; }

.explorer { width: 270px; flex: none; background: #fff; display: flex; flex-direction: column; position: relative; padding-left: 12px; }
.ex-head { height: 28px; flex: none; display: flex; justify-content: space-between; padding: 3px 7px 0 0; }
.ex-head h2 { margin: 9px 0 0; font-size: 10.500px; font-weight: 700; color: #444; line-height: 13px; }
.ex-tools { height: 18px; margin-bottom: 5px; flex: none; display: flex; align-items: center; color: #444; padding-left: 4px; }
.t-car { margin-left: 2px; }
.t-del { margin-left: 10px; }
.t-sep { width: 1px; height: 15px; background: #ddd; margin-left: 9px; }
.t-up { margin-left: 9px; }
.t-up + .t-sep { margin-left: 10px; }
.t-prop { margin-left: 9px; color: #555; }
.t-dots { margin-left: auto; margin-right: 15px; color: #333; }

.tree { list-style: none; margin: 0; padding: 0; flex: 1; }
.row { height: 17.450px; display: flex; align-items: center; font-size: 10.500px; line-height: 17px; color: #666b72; white-space: nowrap; width: 243px; }
.row.sel { background: #efefef; }
.l0 { padding-left: 18px; }
.l1 { padding-left: 32.600px; }
.l2 { padding-left: 47.200px; }
.l3 { padding-left: 61.800px; }
.l4 { padding-left: 76.400px; }
.l5 { padding-left: 91px; }
.l4.leaf { padding-left: 84.400px; }
.l5.leaf { padding-left: 99px; }
.arr { width: 6px; height: 8px; margin-right: 2px; }
.fld { width: 12px; height: 11px; margin-right: 5px; color: #555; }
.fil { width: 14px; height: 14px; margin-right: 4px; color: #666; }
.sb-v { position: absolute; left: 257px; top: 86px; width: 2px; height: 100px; background: #6c6c78; }
.sb-h { position: absolute; left: 15px; bottom: 11px; width: 228px; height: 2px; background: #6c6c78; }

.gutter { width: 12px; flex: none; display: flex; align-items: center; justify-content: center; color: #444; }

/* main */
.main { flex: 1; min-width: 0; display: flex; flex-direction: column; background: #fff; padding: 0 6px 0 7px; position: relative; }
.main::before { content: ""; position: absolute; left: 0; right: 0; top: 0; height: 24px; background: #f3f6fb; }
.doc-tabs { height: 24px; flex: none; display: flex; align-items: stretch; font-size: 9px; color: #555; position: relative; }
.dt { display: flex; align-items: center; white-space: nowrap; }
.dt-start { width: 80px; padding-left: 4px; gap: 5px; letter-spacing: .1px; }
.dt-active { width: 96px; background: #fff; border-top: 1px solid #333; padding-left: 12px; gap: 4px; font-size: 8.500px; color: #666; }
.dt-i { width: 11px; height: 11px; }
.dt-x { width: 6px; height: 6px; margin-left: 3px; color: #333; }
.dt-add { margin-left: 4px; font: 700 13px/24px "Open Sans", sans-serif; color: #555; }

.toolbar { height: 33px; flex: none; display: flex; align-items: center; font-size: 10.500px; color: #666; }
.tb-run { margin-left: 4px; display: flex; align-items: center; gap: 4px; width: 30px; }
.tb-cancel { margin-left: 12px; display: flex; align-items: center; gap: 4px; color: #c4c4c4; width: 44px; }
.ti { width: 13px; height: 13px; margin: 0 4px 0 3px; color: #555; }
.ti.first { margin-left: 13px; }
.ti.off, .ts.off { color: #cfcfcf; }
.sep { width: 1px; height: 16px; background: #d5d5d5; margin: 0 4.300px 0 5px; }
.tb-dd { display: flex; align-items: center; }
.tb-add { margin-left: 10px; width: 51px; padding-right: 19px; justify-content: space-between; }
.sep-dd { margin-left: 0; margin-right: 13px; }
.tb-view { width: 38px; justify-content: space-between; }
.sep-dd2 { margin-left: 13px; margin-right: 9px; }
.ts { width: 11px; height: 11px; margin-right: 7px; color: #333; }
.ts-mid { margin-right: 10px; }
.tb-dots { margin-left: auto; margin-right: 6px; color: #333; }

.subtabs { height: 22px; flex: none; display: flex; align-items: flex-start; border-bottom: 2px solid #dcdcdc; font-size: 9px; color: #555; }
.st { padding: 0 9px; height: 22px; line-height: 21px; letter-spacing: .1px; white-space: nowrap; }
.st-on { width: 37px; border-bottom: 1px solid #444; }
.canvas { height: 106px; flex: none; display: flex; justify-content: space-between; align-items: flex-start; }
.node { width: 78px; padding-top: 15px; display: flex; flex-direction: column; align-items: center; font-size: 10px; color: #777; gap: 4px; }
.node-c { width: 30px; height: 30px; border-radius: 50%; background: #555; display: flex; align-items: center; justify-content: center; }
.side-tabs { width: 25px; height: 94px; margin-top: 5px; background: #f7f9fc; border: 1px solid #e6e9ee; display: flex; flex-direction: column; align-items: center; gap: 23px; padding-top: 23px; color: #555; }
.split-bar { height: 1px; flex: none; background: #e3e3e3; display: flex; justify-content: center; }
.split-bar span { font: 700 9px/1px "Open Sans", sans-serif; color: #666; margin-top: -1px; height: 1px; }
.details { flex: 1; min-height: 0; display: flex; flex-direction: column; }
.details-ctl { height: 36px; flex: none; display: flex; align-items: center; justify-content: flex-end; padding-right: 6px; }
.c-min { width: 7px; height: 1px; background: #ccc; margin-right: 10px; }
.c-max { width: 9px; height: 7px; border: 1px solid #444; margin-right: 16px; }
.c-dots { color: #ddd; }
.details-msg { flex: 1; display: flex; align-items: center; justify-content: center; padding-bottom: 16px; font-size: 10px; color: #707070; letter-spacing: .2px; }

/* status bar */
.statusbar { height: 19px; flex: none; display: flex; align-items: center; background: #f3f5f8; font-size: 9.500px; color: #666; padding: 0 5px 0 3px; white-space: nowrap; }
.sb-item { display: flex; align-items: center; gap: 3px; }
.sb-rec { margin-left: auto; }
.sb-sub { margin-left: 15px; }
.sb-exp { margin-left: 10px; }

/* taskbar */
.taskbar { height: 32px; flex: none; display: flex; align-items: center; background: #1c1c1c; padding: 0 0 2px 10px; color: #ddd; }
.tk { margin-right: 20px; }
.tk:nth-child(2) { margin-right: 19px; }
.tk-view { margin-right: 14px; }
.ap { margin-right: 7px; }
.tk-app { width: 32.700px; height: 30px; display: flex; align-items: center; justify-content: center; position: relative; }
.ap + .tk-app { margin-left: 9px; }
.tk-app.run::after { content: ""; position: absolute; left: 3px; right: 3px; bottom: 3px; height: 1px; background: #b8b8b8; }
.tray { margin-left: auto; display: flex; align-items: center; height: 30px; padding-right: 8px; }
.meter { display: flex; gap: 1px; height: 16px; }
.meter i { width: 5.800px; border: 1px solid #3f8a4f; background: #16221a; }
.meter i.hi { border-color: #7fbf8f; background: linear-gradient(#16221a 80%, #ddd 80%); }
.net, .net2 { display: flex; flex-direction: column; font: 700 7.500px/9px "Liberation Sans", sans-serif; white-space: nowrap; }
.net { margin-left: 7px; width: 49px; }
.net2 { width: 40px; align-items: center; }
.n-w { color: #d8d8d8; }
.n-b { color: #8f8be0; }
.n-g { color: #7dd67d; }
.pie { margin-right: 6px; }
.ty { width: 12px; margin-right: 4.100px; }
.lang { font: 9px "Open Sans", sans-serif; color: #ddd; margin-left: 6px; }
.clock { margin-left: 7px; width: 44px; display: flex; flex-direction: column; align-items: center; font: 8.500px/13px "Open Sans", sans-serif; color: #ddd; white-space: nowrap; }
.notif { width: 30px; position: relative; display: flex; justify-content: center; }
.notif b { position: absolute; left: 12px; top: 3px; width: 14px; height: 14px; border-radius: 50%; background: #333; border: 1px solid #999; font: 8px/12px "Open Sans", sans-serif; color: #eee; text-align: center; }

.cursor { position: absolute; left: 684px; top: 567px; }
```
